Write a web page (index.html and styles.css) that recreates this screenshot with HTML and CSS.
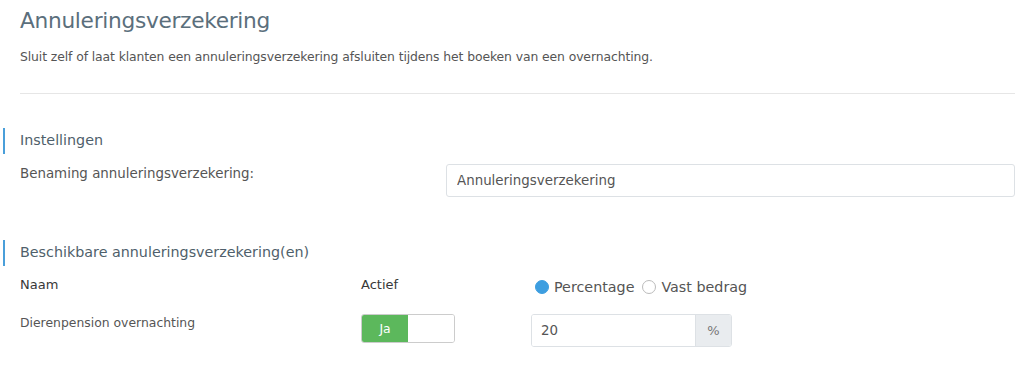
FILE: index.html
```html
<!DOCTYPE html>
<html lang="nl">
<head>
    <meta charset="UTF-8">
    <meta name="viewport" content="width=device-width, initial-scale=1.0">
    <title>Annuleringsverzekering</title>
    <link rel="stylesheet" href="styles.css">
</head>
<body>
    <div class="page">
        <h1 class="page-title">Annuleringsverzekering</h1>
        <p class="intro">Sluit zelf of laat klanten een annuleringsverzekering afsluiten tijdens het boeken van een overnachting.</p>
        <hr class="divider">

        <h2 class="section-title">Instellingen</h2>
        <div class="form-row">
            <label class="form-label" for="naam">Benaming annuleringsverzekering:</label>
            <input class="text-input" id="naam" type="text" value="Annuleringsverzekering">
        </div>

        <h2 class="section-title second">Beschikbare annuleringsverzekering(en)</h2>
        <div class="table">
            <div class="th">Naam</div>
            <div class="th">Actief</div>
            <div class="th radios">
                <span class="radio checked"></span>Percentage
                <span class="radio"></span>Vast bedrag
            </div>

            <div class="td name">Dierenpension overnachting</div>
            <div class="td">
                <div class="toggle">
                    <span class="toggle-on">Ja</span>
                    <span class="toggle-off"></span>
                </div>
            </div>
            <div class="td">
                <div class="input-group">
                    <input class="group-input" type="text" value="20">
                    <span class="addon">%</span>
                </div>
            </div>
        </div>
    </div>
</body>
</html>
```

FILE: styles.css
```css
body {
    margin: 0;
    padding: 0;
    font-family: 'DejaVu Sans', sans-serif;
    color: #555;
    background: #fff;
}

.page {
    padding: 0 9px 0 20px;
}

.page-title {
    margin: 0;
    padding-top: 7px;
    font-size: 21.7px;
    font-weight: normal;
    color: #5b6f7c;
    letter-spacing: -0.3px;
    line-height: 28px;
}

.intro {
    margin: 14px 0 0;
    font-size: 12.4px;
    line-height: 16px;
    letter-spacing: -0.1px;
}

.divider {
    border: none;
    border-top: 1px solid #e6e6e6;
    margin: 28px 0 0;
}

.section-title {
    position: relative;
    margin: 37px 0 0;
    font-size: 14.3px;
    font-weight: normal;
    color: #4f5f6b;
    line-height: 18px;
}

/* blue accent to the left of the section headers */
.section-title::before {
    content: '';
    position: absolute;
    left: -17px;
    top: -3px;
    width: 2px;
    height: 26px;
    background: #4a9fda;
}

.section-title.second {
    margin-top: 46px;
}

.form-row {
    display: flex;
    align-items: flex-start;
    margin-top: 15px;
}

.form-label {
    width: 426px;
    font-size: 13.4px;
    line-height: 16px;
    padding-top: 2px;
}

.text-input {
    flex: 1;
    height: 33px;
    box-sizing: border-box;
    border: 1px solid #dde1e5;
    border-radius: 3px;
    padding: 0 10px;
    font-family: inherit;
    font-size: 13.4px;
    color: #555;
}

.table {
    display: grid;
    grid-template-columns: 341px 170px 201px;
    grid-template-rows: 16px auto;
    row-gap: 21px;
    margin-top: 16px;
}

.th {
    font-size: 13px;
    color: #383838;
    line-height: 16px;
}

.radios {
    display: flex;
    align-items: center;
    height: 16px;
    margin-top: 2px;
    padding-left: 4px;
    font-size: 14.3px;
    color: #555;
    white-space: nowrap;
}

.radio {
    flex-shrink: 0;
    width: 14px;
    height: 14px;
    box-sizing: border-box;
    border: 1px solid #bbb;
    border-radius: 50%;
    margin-right: 5px;
}

.radio.checked {
    background: #3d9ee0;
    border-color: #3d9ee0;
}

.radio:not(.checked) {
    margin-left: 8px;
}

.td {
    font-size: 12.4px;
}

.td.name {
    padding-top: 1px;
    line-height: 16px;
}

.toggle {
    display: flex;
    width: 94px;
    height: 29px;
    box-sizing: border-box;
    border: 1px solid #ccc;
    border-radius: 3px;
    overflow: hidden;
}

.toggle-on {
    width: 46px;
    background: #5cb85c;
    color: #fff;
    display: flex;
    align-items: center;
    justify-content: center;
    font-size: 12.4px;
}

.toggle-off {
    flex: 1;
    background: #fff;
}

.input-group {
    display: flex;
    height: 33px;
    border: 1px solid #dde1e5;
    border-radius: 3px;
    box-sizing: border-box;
    overflow: hidden;
}

.group-input {
    flex: 1;
    min-width: 0;
    border: none;
    padding: 0 9px;
    font-family: inherit;
    font-size: 13.4px;
    color: #555;
}

.addon {
    width: 35px;
    background: #e9ecef;
    border-left: 1px solid #dde1e5;
    display: flex;
    align-items: center;
    justify-content: center;
    font-size: 13px;
    color: #777;
}
```
